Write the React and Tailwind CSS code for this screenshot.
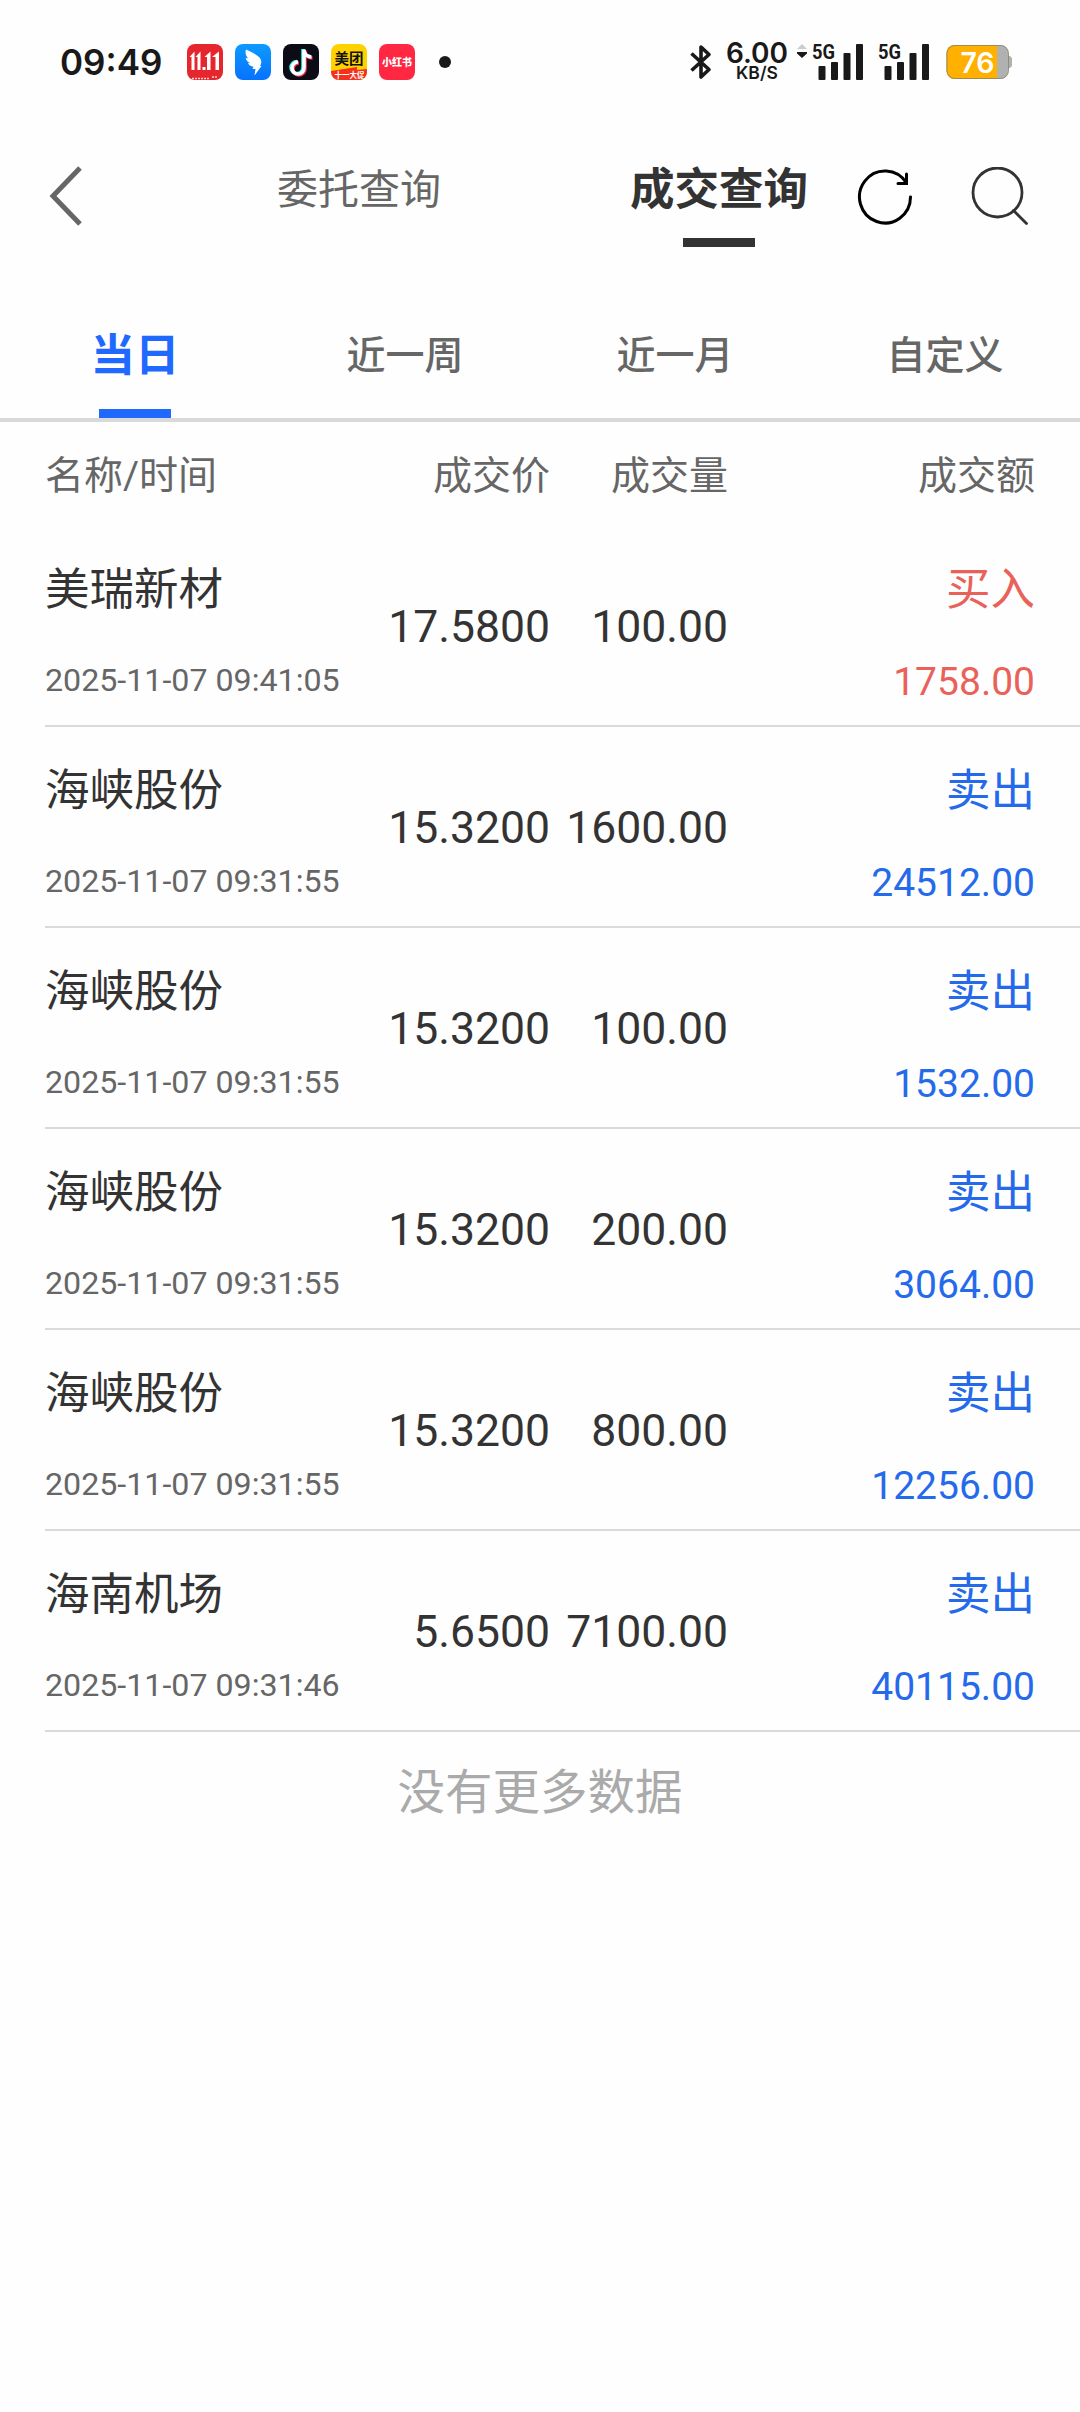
import clsx from 'clsx';

// ── Constants ────────────────────────────────────────────────────────────────

const PERIODS = ['当日', '近一周', '近一月', '自定义'];

const TRADES = [
  { name: '美瑞新材', time: '2025-11-07 09:41:05', price: '17.5800', volume: '100.00',  side: 'buy',  amount: '1758.00' },
  { name: '海峡股份', time: '2025-11-07 09:31:55', price: '15.3200', volume: '1600.00', side: 'sell', amount: '24512.00' },
  { name: '海峡股份', time: '2025-11-07 09:31:55', price: '15.3200', volume: '100.00',  side: 'sell', amount: '1532.00' },
  { name: '海峡股份', time: '2025-11-07 09:31:55', price: '15.3200', volume: '200.00',  side: 'sell', amount: '3064.00' },
  { name: '海峡股份', time: '2025-11-07 09:31:55', price: '15.3200', volume: '800.00',  side: 'sell', amount: '12256.00' },
  { name: '海南机场', time: '2025-11-07 09:31:46', price: '5.6500',  volume: '7100.00', side: 'sell', amount: '40115.00' },
];

const SIDES = {
  buy:  { label: '买入', text: 'text-[#e9625a]' },
  sell: { label: '卖出', text: 'text-[#246aea]' },
};

// ── Status bar ───────────────────────────────────────────────────────────────

function AppIcons() {
  return (
    <div className="flex gap-3">
      {/* 11.11 sale */}
      <svg className="w-9 h-9" viewBox="0 0 36 36">
        <rect width="36" height="36" rx="8" fill="#e6262d" />
        <g fill="#fff">
          <path d="M2.500 13l5-5.500V26H4.500V13z" />
          <path d="M8.500 13l5-5.500V26h-3V13z" />
          <path d="M15.500 23h3v3h-3z" />
          <path d="M17.500 13l6-5.500V26h-3.500V13z" />
          <path d="M25 13l7-5.500V26h-3.500V13z" />
        </g>
        <path d="M5 34.500h18M25 33h6" stroke="#ffd0cc" strokeWidth="1.500" strokeDasharray="2 1" />
      </svg>
      {/* DingTalk */}
      <svg className="w-9 h-9" viewBox="0 0 36 36">
        <defs>
          <linearGradient id="dingtalk" x1="0" y1="0" x2="0" y2="1">
            <stop offset="0" stopColor="#0d9bff" />
            <stop offset="1" stopColor="#0672ff" />
          </linearGradient>
        </defs>
        <rect width="36" height="36" rx="8" fill="url(#dingtalk)" />
        <path
          d="M11 5.500c5 2.500 10 4.500 13 7.500 2.400 2.500 2.800 5 1.800 7.500l-.8 1.500h1.500L19.500 31.500l1-6.500h-3l1-2.300c-3-.3-4.500-1.700-5.500-3.700l2.500.3c-3-1.300-4.300-3.300-4.800-5.600l2.500.8C11 12 9.800 9 11 5.500z"
          fill="#fff"
        />
      </svg>
      {/* Douyin */}
      <svg className="w-9 h-9" viewBox="0 0 36 36">
        <rect width="36" height="36" rx="8" fill="#0c0c16" />
        <g fill="none" strokeWidth="3.600">
          <path d="M20 5v18.500a6 6 0 1 1-6-6M20 6c.5 4 3.500 6.500 7.500 6.500" stroke="#25f4ee" />
          <path d="M22 6.500V25a6 6 0 1 1-6-6M22 7.500c.5 4 3.500 6.500 7.500 6.500" stroke="#fe2c55" />
          <path d="M21 5.500V24a6 6 0 1 1-6-6M21 6.500c.5 4 3.500 6.500 7.500 6.500" stroke="#fff" />
        </g>
      </svg>
      {/* Meituan */}
      <svg className="w-9 h-9" viewBox="0 0 36 36">
        <defs>
          <clipPath id="meituan">
            <rect width="36" height="36" rx="8" />
          </clipPath>
        </defs>
        <g clipPath="url(#meituan)">
          <rect width="36" height="36" fill="#ffd100" />
          <path d="M0 27l26-4v3l10-1v11H0z" fill="#f5301e" />
          <text x="18" y="19.500" textAnchor="middle" fontSize="14.500" fontWeight="700" fill="#111" fontFamily="Noto Sans CJK SC">美团</text>
          <text x="18.500" y="34" textAnchor="middle" fontSize="7.500" fontWeight="700" fill="#fff" fontFamily="Noto Sans CJK SC">十一大促</text>
        </g>
      </svg>
      {/* Xiaohongshu */}
      <svg className="w-9 h-9" viewBox="0 0 36 36">
        <rect width="36" height="36" rx="8" fill="#ff2742" />
        <text x="18" y="22" textAnchor="middle" fontSize="10" fontWeight="900" fill="#fff" fontFamily="Noto Sans CJK SC">小红书</text>
      </svg>
    </div>
  );
}

function Signal() {
  return (
    <svg className="w-[52px] h-9 overflow-visible" viewBox="0 0 52 36" fill="#191919">
      <text x="0" y="14.500" fontSize="20.500" fontWeight="700" textLength="23" lengthAdjust="spacingAndGlyphs" fontFamily="Roboto">5G</text>
      <rect x="6.500" y="22" width="7" height="14" rx="1" />
      <rect x="19" y="18" width="7" height="18" rx="1" />
      <rect x="31.500" y="9" width="7" height="27" rx="1" />
      <rect x="44" y="0" width="7" height="36" rx="1" />
    </svg>
  );
}

function Battery() {
  return (
    <svg className="w-[66px] h-9" viewBox="0 0 66 36">
      <defs>
        <clipPath id="battery">
          <rect x="0.500" y="1" width="62" height="34" rx="8" />
        </clipPath>
      </defs>
      <path d="M62 12h2l2 2v8l-2 2h-2z" fill="#b1b1b1" />
      <g clipPath="url(#battery)">
        <rect width="66" height="36" fill="#b1b1b1" />
        <rect width="51" height="36" fill="#ffb000" />
      </g>
      <rect x="1" y="1.500" width="61.500" height="33" rx="8" fill="none" stroke="#8a8168" strokeWidth="0.800" />
      <text x="31.500" y="28.500" textAnchor="middle" fontSize="28.500" fontWeight="600" fill="#fff" fontFamily="Inter">76</text>
    </svg>
  );
}

function StatusBar() {
  return (
    <div className="h-[124px] flex items-center justify-between pl-[60px] pr-[68px] text-[#191919] font-['Inter']">
      <div className="flex items-center">
        <span className="w-[127px] text-[35px] font-semibold leading-none">09:49</span>
        <AppIcons />
        <span className="ml-6 w-3 h-3 rounded-full bg-[#191919]" />
      </div>
      <div className="flex items-center">
        <svg className="w-[22px] h-9" viewBox="0 0 22 36" fill="none" stroke="#191919" strokeWidth="3.600">
          <path d="M1.500 9.500l17.500 16L11 33V3l8 7.500-17.500 16" strokeLinejoin="round" />
        </svg>
        <div className="ml-3.5 mr-0.5 w-[62px] flex flex-col items-center font-semibold">
          <span className="text-[28px] leading-[21px]">6.00</span>
          <span className="text-[17.500px] leading-[17px]">KB/S</span>
        </div>
        <svg className="ml-[7px] mr-[5px] w-2.5 h-9" viewBox="0 0 10 36">
          <path d="M0 5l5-5 5 5z" fill="#ccc" />
          <path d="M0 8h10v1.500l-5 4.500-5-4.500z" fill="#191919" />
        </svg>
        <Signal />
        <div className="w-3.5" />
        <Signal />
        <div className="w-4" />
        <Battery />
      </div>
    </div>
  );
}

// ── Header ───────────────────────────────────────────────────────────────────

function Header() {
  return (
    <header className="h-[178px] flex pt-[43px]">
      <svg className="w-10 h-[60px] ml-[49px] -mt-px shrink-0" viewBox="0 0 40 60" fill="none" stroke="#666" strokeWidth="5">
        <path d="M31 2L4 30l27 28" />
      </svg>
      <nav className="ml-[138px] flex gap-24">
        <button className="w-[264px] h-11 flex justify-center text-[41px] leading-[46px] text-[#666]">委托查询</button>
        <button className="w-[264px] flex flex-col items-center self-start text-[44.500px] font-bold text-[#333]">
          <span className="leading-[47px]">成交查询</span>
          <span className="mt-6 w-18 h-[9px] bg-[#333]" />
        </button>
      </nav>
      <svg className="ml-[5px] mt-px w-[58px] h-[58px] shrink-0" viewBox="0 0 58 58" fill="none" stroke="#000" strokeWidth="3" strokeLinecap="round">
        <path d="M54.500 29A25.500 26 0 1 1 50.500 15" />
        <path d="M50.500 6v9.500H42" />
      </svg>
      <svg className="ml-[57px] w-[58px] h-[60px] shrink-0" viewBox="0 0 58 60" fill="none" stroke="#333" strokeWidth="2.800" strokeLinecap="round">
        <circle cx="26.500" cy="25.500" r="24.500" />
        <path d="M42.500 43.500l13 13" />
      </svg>
    </header>
  );
}

function PeriodTabs({ active }) {
  return (
    <div className="h-[120px] grid grid-cols-4 border-b-4 border-[#d9d9d9]">
      {PERIODS.map((p) => (
        <button
          key={p}
          className={clsx(
            'flex flex-col items-center justify-between pt-8',
            p === active ? 'text-[44.500px] font-bold text-[#1f69ff]' : 'text-[39px] font-medium text-[#666]',
          )}
        >
          <span className="leading-11">{p}</span>
          {p === active && <span className="w-18 h-[9px] bg-[#1f69ff]" />}
        </button>
      ))}
    </div>
  );
}

// ── Trade list ───────────────────────────────────────────────────────────────

function TradeRow({ trade }) {
  const side = SIDES[trade.side];
  return (
    <div className="ml-[45px] pr-[45px] h-[201px] grid grid-cols-[325px_180px_178px_1fr] border-b-2 border-[#dadada]">
      <div className="pt-[38px] whitespace-nowrap">
        <div className="text-[44.500px] leading-[52px] text-[#333]">{trade.name}</div>
        <div className="mt-[46px] text-[32.200px] leading-9 text-[#666]">{trade.time}</div>
      </div>
      <div className="self-center pt-1 text-right text-[44.500px] text-[#333]">{trade.price}</div>
      <div className="self-center pt-1 text-right text-[44.500px] text-[#333]">{trade.volume}</div>
      <div className={clsx('pt-[38px] text-right', side.text)}>
        <div className="text-[44.500px] leading-[52px]">{side.label}</div>
        <div className="mt-[46px] text-[39px] leading-10">{trade.amount}</div>
      </div>
    </div>
  );
}

export default function App() {
  return (
    <div className="w-[1080px] h-[2412px] bg-[#fefefe] overflow-hidden font-['Roboto','Noto_Sans_CJK_SC',sans-serif]">
      <StatusBar />
      <Header />
      <PeriodTabs active="当日" />
      <div className="h-[104px] px-[45px] pt-1 grid grid-cols-[325px_180px_178px_1fr] items-center text-[39px] text-[#666]">
        <span>名称/时间</span>
        <span className="text-right">成交价</span>
        <span className="text-right">成交量</span>
        <span className="text-right">成交额</span>
      </div>
      {TRADES.map((trade, i) => (
        <TradeRow key={i} trade={trade} />
      ))}
      <p className="pt-[33px] text-center text-[47.500px] leading-[56px] text-[#aaa]">没有更多数据</p>
    </div>
  );
}
